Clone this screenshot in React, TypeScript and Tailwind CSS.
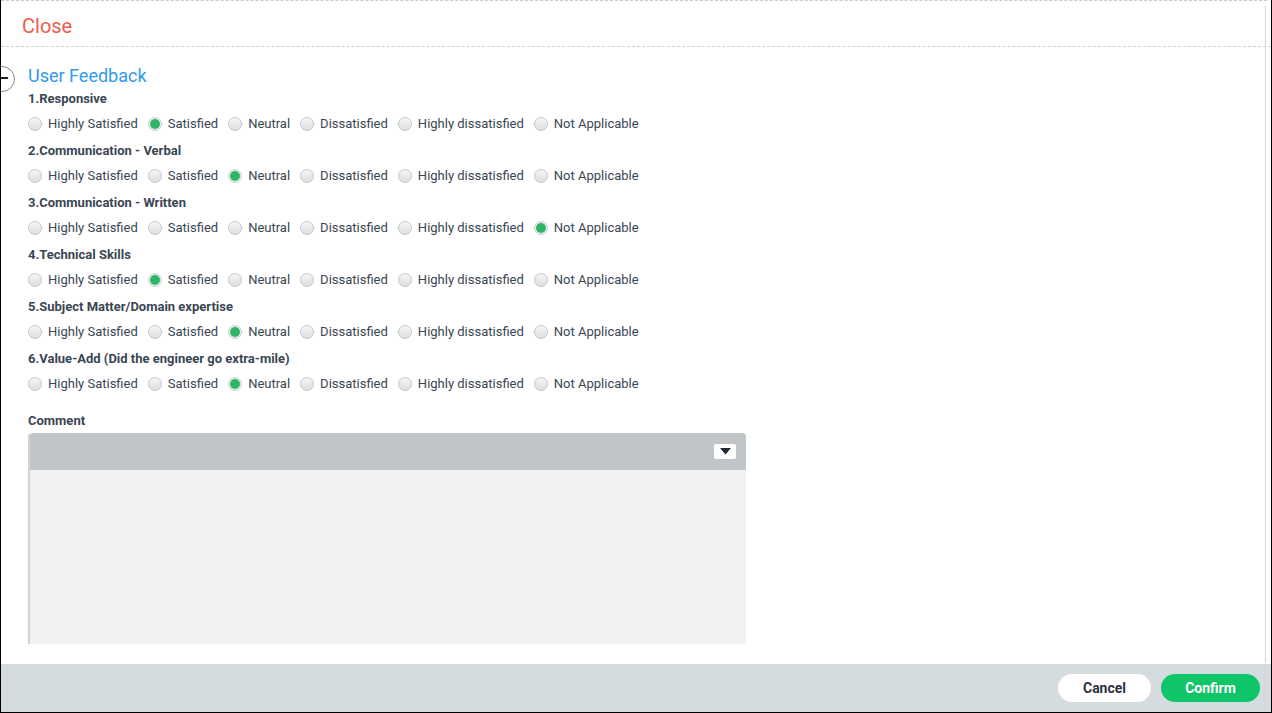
import React from "react";

const OPTIONS = [
  "Highly Satisfied",
  "Satisfied",
  "Neutral",
  "Dissatisfied",
  "Highly dissatisfied",
  "Not Applicable",
];

const QUESTIONS: { label: string; value: number }[] = [
  { label: "1.Responsive", value: 1 },
  { label: "2.Communication - Verbal", value: 2 },
  { label: "3.Communication - Written", value: 5 },
  { label: "4.Technical Skills", value: 1 },
  { label: "5.Subject Matter/Domain expertise", value: 2 },
  { label: "6.Value-Add (Did the engineer go extra-mile)", value: 2 },
];

function Radio({ checked }: { checked: boolean }) {
  if (checked) {
    return (
      <span className="w-[14px] h-[14px] rounded-full border border-[#c8cdd0] bg-[#eef0f1] flex items-center justify-center shrink-0">
        <span className="w-[10px] h-[10px] rounded-full bg-[#2fb565]" />
      </span>
    );
  }
  return (
    <span className="w-[14px] h-[14px] rounded-full border border-[#c4c8cb] bg-gradient-to-b from-[#f7f7f7] to-[#dcdcdc] shrink-0" />
  );
}

export default function App() {
  return (
    <div
      className="w-[1272px] h-[713px] bg-white relative flex flex-col border-l border-r border-b border-black overflow-hidden"
      style={{ fontFamily: "Roboto, 'Liberation Sans', sans-serif" }}
    >
      <div className="absolute top-0 left-0 right-[4px] border-t border-dashed border-[#c9c9c9]" />
      <div className="absolute top-[6px] right-[5px] bottom-[49px] border-r border-[#d4d4d4]" />

      {/* header */}
      <div className="h-[47px] border-b border-dashed border-[#cfcfcf] px-[21px] pt-[6px] flex items-center shrink-0">
        <span className="text-[20px] text-[#f05a4f] leading-none">Close</span>
      </div>

      {/* left bubble fragment */}
      <div className="absolute left-[-12px] top-[66px] w-[26px] h-[26px] rounded-full border border-[#8a8a8a]" />
      <div className="absolute left-0 top-[77px] w-[7px] h-[2px] bg-[#222]" />

      <div className="flex-1 px-[27px] pt-[20px]">
        <div className="text-[18px] text-[#2f9bf0] leading-none mb-[6px]">User Feedback</div>
        {QUESTIONS.map((q) => (
          <div key={q.label} className="h-[52px]">
            <div className="text-[13px] font-bold text-[#3a4654] leading-[16px]">{q.label}</div>
            <div className="flex items-center mt-[9px]">
              {OPTIONS.map((o, i) => (
                <div key={o} className="flex items-center gap-[6px] mr-[10px]">
                  <Radio checked={q.value === i} />
                  <span className="text-[13px] text-[#3a4654] leading-[16px]">{o}</span>
                </div>
              ))}
            </div>
          </div>
        ))}

        <div className="text-[13px] font-bold text-[#3a4654] leading-[16px] mt-[10px]">Comment</div>
        <div className="mt-[4px] w-[718px] h-[211px] bg-[#f0f1f2] border-l-2 border-[#d0d2d4] rounded-t-[4px] flex flex-col">
          <div className="h-[37px] bg-[#c1c5c8] rounded-t-[4px] flex items-center justify-end pr-[10px]">
            <div className="w-[22px] h-[15px] bg-white rounded-[2px] flex items-center justify-center">
              <svg width="11" height="7" viewBox="0 0 11 7">
                <path d="M0 0 L11 0 L5.5 6.5 Z" fill="#1f2a36" />
              </svg>
            </div>
          </div>
        </div>
      </div>

      {/* footer */}
      <div className="h-[48px] bg-[#d5dcdf] flex items-center justify-end gap-[10px] pr-[11px] shrink-0">
        <button className="w-[93px] h-[28px] rounded-full bg-white text-[14px] font-bold text-[#2b3340]">
          Cancel
        </button>
        <button className="w-[99px] h-[28px] rounded-full bg-[#10c46a] text-[14px] font-bold text-white">
          Confirm
        </button>
      </div>
    </div>
  );
}
